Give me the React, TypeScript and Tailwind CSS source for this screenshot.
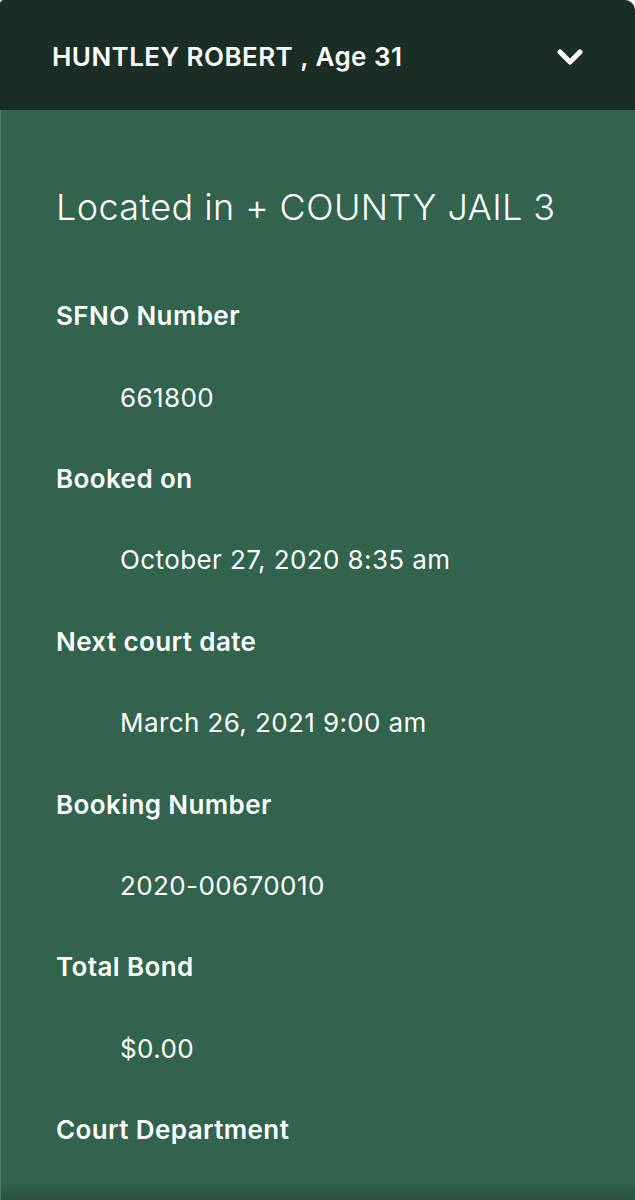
import React from "react";

const rows: { label: string; value?: string }[] = [
  { label: "SFNO Number", value: "661800" },
  { label: "Booked on", value: "October 27, 2020 8:35 am" },
  { label: "Next court date", value: "March 26, 2021 9:00 am" },
  { label: "Booking Number", value: "2020-00670010" },
  { label: "Total Bond", value: "$0.00" },
  { label: "Court Department" },
];

export default function App() {
  return (
    <div
      className="w-[635px] h-[1200px] overflow-hidden bg-white"
      style={{ fontFamily: "Inter, 'Noto Sans', sans-serif" }}
    >
      <div className="h-full rounded-tl-[4px] rounded-tr-[10px] overflow-hidden flex flex-col">
        <div className="h-[110px] shrink-0 bg-[#1b2e25] flex items-center justify-between pl-[52px] pr-[52px] pt-[3px]">
          <span className="text-white font-semibold text-[26px] tracking-[0.45px]">
            HUNTLEY ROBERT , Age 31
          </span>
          <svg width="26" height="18" viewBox="0 0 26 18">
            <path
              d="M3 4 L13 14 L23 4"
              fill="none"
              stroke="white"
              strokeWidth="5"
              strokeLinecap="round"
              strokeLinejoin="round"
            />
          </svg>
        </div>
        <div className="flex-1 bg-[#31634d] border-l border-[#4a7a64] pl-[55px] pt-[56px] text-white relative">
          <div className="h-[82px] flex items-center text-[36px] font-light tracking-[0.4px]">
            Located in + COUNTY JAIL 3
          </div>
          <div className="h-[27px]" />
          {rows.map((r) => (
            <React.Fragment key={r.label}>
              <div className="h-[81.4px] flex items-center text-[26px] font-semibold tracking-[0.4px]">
                {r.label}
              </div>
              {r.value && (
                <div className="h-[81.4px] flex items-center text-[26px] tracking-[0.4px] pl-[64px]">
                  {r.value}
                </div>
              )}
            </React.Fragment>
          ))}
          <div className="absolute left-0 right-0 bottom-0 h-[18px] bg-gradient-to-b from-[#31634d] to-[#2a5040]" />
        </div>
      </div>
    </div>
  );
}
